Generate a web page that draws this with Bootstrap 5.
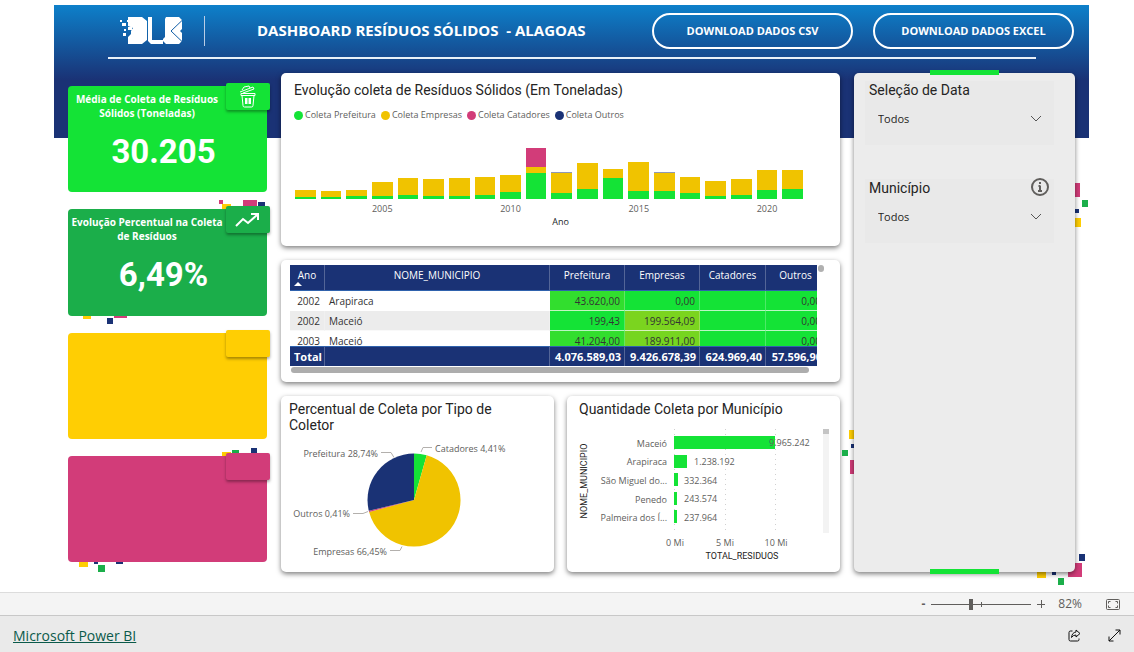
<!DOCTYPE html>
<html lang="pt-BR">
<head>
<meta charset="utf-8">
<meta name="viewport" content="width=device-width, initial-scale=1">
<title>Dashboard Resíduos Sólidos - Alagoas</title>
<link href="https://cdn.jsdelivr.net/npm/bootstrap@5.3.0/dist/css/bootstrap.min.css" rel="stylesheet">
<style>
:root{--green:#14e336;--green2:#1bae4a;--yellow:#ffce03;--gold:#f0c300;--pink:#d23c79;--navy:#1a3275}
body{font-family:"Open Sans","Noto Sans",sans-serif;font-size:9px;line-height:14px;color:#605e5c;background:#fff}
.report{margin:5px 45px 0 54px;padding:0 14px 20px;background:linear-gradient(#0d80ca,#1a3275 75px) no-repeat 0 0/100% 133px}
.topbar{height:52px;padding:0 1px 0 52px}
.brand-rule{width:1px;height:30px;background:#b9cde6;margin-left:22px}
.headline{font-size:15px;line-height:20px;font-weight:700;color:#fff;margin:0 0 2px 52px;flex:1;white-space:pre}
.downloads{gap:20px}
.btn-pill{width:201px;height:36px;border:2px solid #fff;border-radius:18px;color:#fff;font-size:11px;line-height:16px;font-weight:700;padding:0}
.btn-pill:hover{background:#fff;color:var(--navy)}
.rule{height:2px;background:#e9f0f8;margin:0 39px 14px 40px}
.board{display:grid;grid-template-columns:199fr 559fr 221fr;gap:14px}
.kpis{display:grid;grid-auto-rows:1fr;gap:17px;padding:13px 0 10px}
.tile{position:relative;border-radius:4px;color:#fff;isolation:isolate}
.tile .fill{height:100%;min-height:106px;border-radius:4px;background:var(--c);padding-top:6px}
.tile h2{font-size:10px;line-height:14px;font-weight:700;margin:0;width:158px;text-align:center}
.tile .num{font:700 33px/40px Roboto,sans-serif;text-align:center;margin:12px 8px 0 0}
.flag{position:absolute;right:-3px;top:-3px;width:44px;height:27px;border-radius:2px;background:var(--c);box-shadow:0 2px 3px rgba(0,0,0,.35)}
.confetti{position:absolute;left:0;top:0;z-index:-1;overflow:visible}
.y{fill:var(--yellow)}.p{fill:var(--pink)}.n{fill:var(--navy)}.g{fill:var(--green2)}
.panel{background:#fff;border-radius:5px;box-shadow:0 2px 5px rgba(0,0,0,.5)}
.ttl{font:400 14px/16px Roboto,sans-serif;color:#252423;margin:0}
.pair .ttl{padding:5px 50px 0 8px}
.pair .panel + .panel .ttl{padding:5px 8px 0 12px}
.evo{padding:9px 13px 0;height:173px}
.legend-list{margin:10px 0 0;gap:5px}
.dot{width:9px;height:9px;border-radius:50%;margin-right:2px}
.bars{display:grid;grid-template-columns:repeat(20,minmax(0,1fr));gap:5px;margin:17px 24px 0 1px}
.bars .stack{height:60px;display:flex;flex-direction:column;justify-content:flex-end}
.bars .yr{height:16px;line-height:20px;display:flex;justify-content:center;white-space:nowrap}
.tbl-card{padding:5px 15px 9px 9px}
.scroller{height:101px;overflow:hidden;margin-right:8px}
.grid-table{width:calc(100% + 9px);table-layout:fixed;border-collapse:separate;border-spacing:0;font-size:10px;line-height:14px;color:#333}
.grid-table th,.grid-table td{height:20px;padding:0 4px;white-space:nowrap;border-right:1px solid rgba(255,255,255,.25)}
.grid-table th{background:var(--navy);color:#fff;font-weight:400;text-align:center;height:26px;vertical-align:top;padding-top:3px;border-bottom:1px solid #2f62ad;position:relative}
.grid-table tbody td{border-bottom:1px solid rgba(255,255,255,.7);padding-top:1px}
.grid-table tbody tr:nth-child(2){background:#ececec}
.grid-table tfoot td{position:sticky;bottom:0;background:var(--navy);color:#fff;font-size:11px;font-weight:700;border-top:1px solid #2f62ad;padding:1px 3px 0 4px}
.num-cell{text-align:right;background:var(--heat,#14e336)}
.asc{position:absolute;left:4px;bottom:4px;border:4px solid transparent;border-top:0;border-bottom:4px solid #fff}
.hbar{height:6px;border-radius:3px;background:#adadad;margin:1px 16px 0 1px}
.vdot{position:absolute;right:16px;top:5px;width:6px;height:7px;border-radius:3px;background:#b0b0b0}
.middle{gap:14px}
.pair{display:grid;grid-template-columns:1fr 1fr;gap:13px}
.pair .panel{height:176px;overflow:hidden}
.pair svg{display:block;width:100%}
.pair text{font-size:9px;fill:#605e5c}
.pair text.ax{font-family:Roboto,sans-serif;fill:#252423}
.lead-line{fill:none;stroke:#b3b0ad}
.side{position:relative;isolation:isolate;padding:8px 21px 0 11px}
.side .under{position:absolute;inset:0;background:#ececec;border-radius:5px;z-index:-1;box-shadow:0 2px 5px rgba(0,0,0,.5)}
.side .confetti{z-index:-2}
.confetti.low{top:auto;bottom:0}
.confetti.far{left:auto;right:0}
.cap{position:absolute;left:76px;right:76px;top:-3px;height:5px;background:var(--green)}
.cap.low{top:auto;bottom:-2px}
.slicer{background:#e9e9e9;height:64px;padding:1px 4px 0 4px;margin-bottom:34px}
.slicer select{border:0;border-radius:0;background-color:transparent;font-size:11px;line-height:16px;color:#252423;height:24px;padding:0 22px 0 9px;margin-top:9px;background-position:right 8px center;background-size:12px 12px;background-image:url("data:image/svg+xml,%3Csvg xmlns='http://www.w3.org/2000/svg' viewBox='0 0 12 12'%3E%3Cpath d='M1 3l5 5 5-5' fill='none' stroke='%23555'/%3E%3C/svg%3E")}
.slicer-head{height:16px}
.statusbar{height:24px;background:#f4f4f4;border-top:1px solid #dcdcdc;border-bottom:1px solid #c8c8c8;padding-right:14px;font-size:12px;color:#605e5c}
.pct{margin:0 24px 0 13px}
.plain-btn{border:0;background:none;padding:0;color:#605e5c;display:flex;align-items:center;justify-content:center;line-height:16px}
.zoomer{-webkit-appearance:none;appearance:none;width:100px;height:12px;margin:0 6px;background:linear-gradient(#605e5c,#605e5c) no-repeat 50px 50%/1px 5px,linear-gradient(#605e5c,#605e5c) no-repeat 0 50%/100% 1px}
.zoomer::-webkit-slider-thumb{-webkit-appearance:none;width:4px;height:11px;background:#605e5c}
.foot{background:#eaeaea;height:36px;padding:3px 13px 0;gap:27px;font-size:14px;line-height:20px}
.foot a{color:#0b5a4a}
.foot .plain-btn{color:#111}
</style>
</head>
<body class="d-flex flex-column min-vh-100">
<main class="report flex-grow-1">
  <header class="topbar d-flex align-items-center">
    <svg width="62" height="28" viewBox="0 0 62 28" role="img" aria-label="DLB">
      <path fill="#fff" d="M8 0H22L27 4V23L22 27H8V20L11 17V14L13 11L8 9ZM28 0H32V23H43V27H31L28 24ZM46 0H59L62 3V12L60 14L62 16V24L59 27H46L43 24V22L45 20V2Z"/>
      <path fill="none" stroke="#125fa8" d="M62 3.500L51 14L62 24.500"/>
      <path fill="#fff" d="M0 3h2v2H0zM2 6h4v3H2zM7 3h2v2H7zM4 12h2v2H4zM8 10h4v3H8zM3 16h3v3H3z"/>
    </svg>
    <span class="brand-rule"></span>
    <h1 class="headline">DASHBOARD RESÍDUOS SÓLIDOS  - ALAGOAS</h1>
    <div class="downloads d-flex">
      <button type="button" class="btn btn-pill">DOWNLOAD DADOS CSV</button>
      <button type="button" class="btn btn-pill">DOWNLOAD DADOS EXCEL</button>
    </div>
  </header>
  <div class="rule"></div>

  <div class="board">
    <section class="kpis">
      <article class="tile" style="--c:#14e336">
        <div class="fill"><h2>Média de Coleta de Resíduos Sólidos (Toneladas)</h2><div class="num">30.205</div></div>
        <div class="flag d-flex align-items-center justify-content-center">
          <svg width="18" height="23" viewBox="0 0 18 23" fill="none" stroke="#fff" stroke-width="1"><path d="M2 8.500h14v2H2zM3 10.500l1 10q0 1.500 1.500 1.500h7q1.500 0 1.500-1.500l1-10M6.500 13v6M9 13v6M11.500 13v6M7.500 13v6M10.500 13v6M1 7l13-5 1 2-11 4M3 5l2-3 5-1 1 2"/></svg>
        </div>
      </article>
      <article class="tile" style="--c:#1bae4a">
        <svg class="confetti" width="199" height="106"><path class="p" d="M151-9h4v4h-4zM175-9h14v14h-14zM25 100h4v7h-4zM46 100h13v9H46z"/><path class="y" d="M154-5h9v9h-9zM15 100h8v10h-8z"/><path class="n" d="M190-7h7v7h-7zM39 109h6v6h-6zM62 100h6v7h-6z"/></svg>
        <div class="fill"><h2>Evolução Percentual na Coleta de Resíduos</h2><div class="num">6,49%</div></div>
        <div class="flag d-flex align-items-center justify-content-center">
          <svg width="26" height="16" viewBox="0 0 26 16" fill="none" stroke="#fff" stroke-width="2"><path d="M1 14l7-7 5 4 9-8M16 2h7v6"/></svg>
        </div>
      </article>
      <article class="tile" style="--c:#ffce03"><div class="fill"></div><div class="flag"></div></article>
      <article class="tile" style="--c:#d23c79">
        <svg class="confetti" width="199" height="106"><path class="y" d="M154-4h9v9h-9zM11 100h9v11h-9z"/><path class="g" d="M164-6h7v9h-7zM30 109h7v7h-7z"/><path class="n" d="M183-8h6v7h-6zM26 100h4v8h-4zM48 100h7v8h-7z"/></svg>
        <div class="fill"></div><div class="flag"></div>
      </article>
    </section>

    <section class="middle d-flex flex-column justify-content-between">
      <article class="panel evo">
        <h2 class="ttl">Evolução coleta de Resíduos Sólidos (Em Toneladas)</h2>
        <ul class="legend-list list-unstyled d-flex">
          <li class="d-flex align-items-center"><span class="dot" style="background:#14e336"></span>Coleta Prefeitura</li>
          <li class="d-flex align-items-center"><span class="dot" style="background:#f0c300"></span>Coleta Empresas</li>
          <li class="d-flex align-items-center"><span class="dot" style="background:#d23c79"></span>Coleta Catadores</li>
          <li class="d-flex align-items-center"><span class="dot" style="background:#1a3275"></span>Coleta Outros</li>
        </ul>
        <div class="bars" id="bars"></div>
        <div class="text-center text-dark">Ano</div>
      </article>

      <article class="panel tbl-card position-relative">
        <div class="scroller">
          <table class="grid-table">
            <colgroup><col style="width:35px"><col><col style="width:75px"><col style="width:75px"><col style="width:66px"><col style="width:60px"></colgroup>
            <thead><tr><th>Ano<span class="asc"></span></th><th>NOME_MUNICIPIO</th><th>Prefeitura</th><th>Empresas</th><th>Catadores</th><th>Outros</th></tr></thead>
            <tbody>
              <tr><td class="text-end">2002</td><td>Arapiraca</td><td class="num-cell" style="--heat:#32de2e">43.620,00</td><td class="num-cell">0,00</td><td class="num-cell"></td><td class="num-cell">0,00</td></tr>
              <tr><td class="text-end">2002</td><td>Maceió</td><td class="num-cell">199,43</td><td class="num-cell" style="--heat:#7bd41f">199.564,09</td><td class="num-cell"></td><td class="num-cell">0,00</td></tr>
              <tr><td class="text-end">2003</td><td>Maceió</td><td class="num-cell" style="--heat:#32de2e">41.204,00</td><td class="num-cell" style="--heat:#76d520">189.911,00</td><td class="num-cell"></td><td class="num-cell">0,00</td></tr>
            </tbody>
            <tfoot><tr><td>Total</td><td></td><td class="text-end">4.076.589,03</td><td class="text-end">9.426.678,39</td><td class="text-end">624.969,40</td><td class="text-end">57.596,90</td></tr></tfoot>
          </table>
        </div>
        <div class="hbar"></div><span class="vdot"></span>
      </article>

      <div class="pair">
        <article class="panel">
          <h2 class="ttl">Percentual de Coleta por Tipo de Coletor</h2>
          <svg viewBox="0 -4 273 130" role="img" aria-label="Percentual de coleta">
            <path fill="#14e336" d="M133 63V16.500A46.500 46.500 0 0 1 145.700 18.300Z"/>
            <path fill="#f0c300" d="M133 63L145.700 18.300A46.500 46.500 0 1 1 88.100 75Z"/>
            <path fill="#d23c79" d="M133 63L88.100 75L87.800 73.800Z"/>
            <path fill="#1a3275" d="M133 63L87.800 73.800A46.500 46.500 0 0 1 133 16.500Z"/>
            <path class="lead-line" d="M100 15.500h10l3 5M140 15l2-4.500h9M72 76.500h10l5-2M109 113.500h10l2-4"/>
            <text x="97" y="20" text-anchor="end">Prefeitura 28,74%</text><text x="154" y="15">Catadores 4,41%</text>
            <text x="69" y="80" text-anchor="end">Outros 0,41%</text><text x="106" y="118" text-anchor="end">Empresas 66,45%</text>
          </svg>
        </article>
        <article class="panel">
          <h2 class="ttl">Quantidade Coleta por Município</h2>
          <svg viewBox="0 0 273 150" role="img" aria-label="Coleta por município">
            <path d="M107.500 12v104M158.500 12v104M208.500 12v104" stroke="#d0d0d0" stroke-dasharray="1 4"/>
            <path fill="#14e336" d="M107 19h101v13H107zM107 38h13v13h-13zM107 56h4v13h-4zM107 75h3v13h-3zM107 93h3v13h-3z"/>
            <g text-anchor="end"><text x="100" y="30">Maceió</text><text x="100" y="48">Arapiraca</text><text x="100" y="67">São Miguel do...</text><text x="100" y="86">Penedo</text><text x="100" y="104">Palmeira dos Í...</text></g>
            <text x="202" y="29">9.965.242</text><text x="127" y="48">1.238.192</text><text x="117" y="67">332.364</text><text x="117" y="85">243.574</text><text x="117" y="104">237.964</text>
            <g text-anchor="middle"><text x="108" y="129">0 Mi</text><text x="158" y="129">5 Mi</text><text x="209" y="129">10 Mi</text><text class="ax" x="175" y="142">TOTAL_RESIDUOS</text><text class="ax" transform="translate(20 64) rotate(-90)">NOME_MUNICIPIO</text></g>
            <path fill="#f3f3f3" d="M256 12h6v104h-6z"/><path fill="#c4c4c4" d="M256 12h6v5h-6z"/>
          </svg>
        </article>
      </div>
    </section>

    <aside class="side">
      <svg class="confetti low" width="221" height="499"><path class="y" d="M-5 357h9v9h-9zM183 495h9v10h-9z"/><path class="n" d="M-3 371h4v4h-4zM198 495h4v7h-4zM225 481h6v7h-6z"/><path class="g" d="M-12 377h6v6h-6zM204 505h6v7h-6z"/><path class="p" d="M-4 387h14v14H-4zM214 490h14v14h-14z"/></svg>
      <svg class="confetti far" width="221" height="200"><path class="p" d="M212 110h14v14h-14z"/><path class="g" d="M228 127h6v7h-6z"/><path class="n" d="M220 136h5v4h-5z"/><path class="y" d="M218 145h9v9h-9z"/></svg>
      <div class="under"></div>
      <span class="cap"></span><span class="cap low"></span>
      <div class="slicer"><label class="ttl d-block" for="data">Seleção de Data</label><select id="data" class="form-select"><option>Todos</option></select></div>
      <div class="slicer"><div class="slicer-head d-flex align-items-center justify-content-between"><label class="ttl" for="mun">Município</label>
        <svg width="20" height="20" viewBox="0 0 20 20" fill="none" stroke="#605e5c" stroke-width="2"><circle cx="10" cy="9" r="8"/><path d="M10 4v2M10 7.500v6M8.500 8H10M8 13h4"/></svg></div>
        <select id="mun" class="form-select"><option>Todos</option></select></div>
    </aside>
  </div>
</main>

<div class="statusbar d-flex align-items-center justify-content-end">
  <button type="button" class="plain-btn fw-bold" aria-label="Reduzir">-</button>
  <input type="range" class="zoomer" min="0" max="100" value="39" aria-label="Zoom">
  <button type="button" class="plain-btn" aria-label="Ampliar"><svg width="8" height="8" viewBox="0 0 8 8" stroke="currentColor"><path d="M0 4.500h8M4.500 0v8"/></svg></button>
  <span class="pct">82%</span>
  <button type="button" class="plain-btn" aria-label="Ajustar à página"><svg width="14" height="11" viewBox="0 0 14 11" fill="none" stroke="currentColor"><rect x=".5" y=".5" width="13" height="10" rx="1"/><path d="M2.500 4.500v-2h2M9.500 2.500h2v2M11.500 6.500v2h-2M4.500 8.500h-2v-2"/></svg></button>
</div>
<footer class="foot d-flex align-items-center">
  <a href="#" class="me-auto">Microsoft Power BI</a>
  <button type="button" class="plain-btn" aria-label="Compartilhar"><svg width="13" height="13" viewBox="0 0 13 13" fill="none" stroke="currentColor"><path d="M4.500 2H2.500Q1 2 1 3.500v7Q1 12 2.500 12h7Q11 12 11 10.500V9.500M8 1l4 3.500L8 8V6Q5 6 3.500 8.500 4 3.500 8 3z"/></svg></button>
  <button type="button" class="plain-btn" aria-label="Tela cheia"><svg width="13" height="13" viewBox="0 0 13 13" fill="none" stroke="currentColor"><path d="M1 12L12 1M7.500 1H12v4.500M1 7.500V12h4.500"/></svg></button>
</footer>

<script>
// Series order: prefeitura, empresas, catadores, outros
const serie = [[2,7],[2,6],[3,6],[3,14],[4,17],[3,17],[3,18],[4,18],[7,17],[26,6,19],[6,20,0,1],[10,26],[21,9],[8,29],[8,18,0,1],[6,16],[3,15],[4,16],[9,20],[10,19]];
const cores = ['#14e336','#f0c300','#d23c79','#8f98b5'];
document.getElementById('bars').innerHTML = serie.map((s, i) => {
  const ano = 2002 + i;
  const partes = s.map((v, k) => `<div style="height:${v}px;background:${cores[k]}"></div>`).reverse().join('');
  return `<div><div class="stack">${partes}</div><div class="yr">${ano % 5 ? '' : ano}</div></div>`;
}).join('');
</script>
<script src="https://cdn.jsdelivr.net/npm/bootstrap@5.3.0/dist/js/bootstrap.bundle.min.js"></script>
</body>
</html>
